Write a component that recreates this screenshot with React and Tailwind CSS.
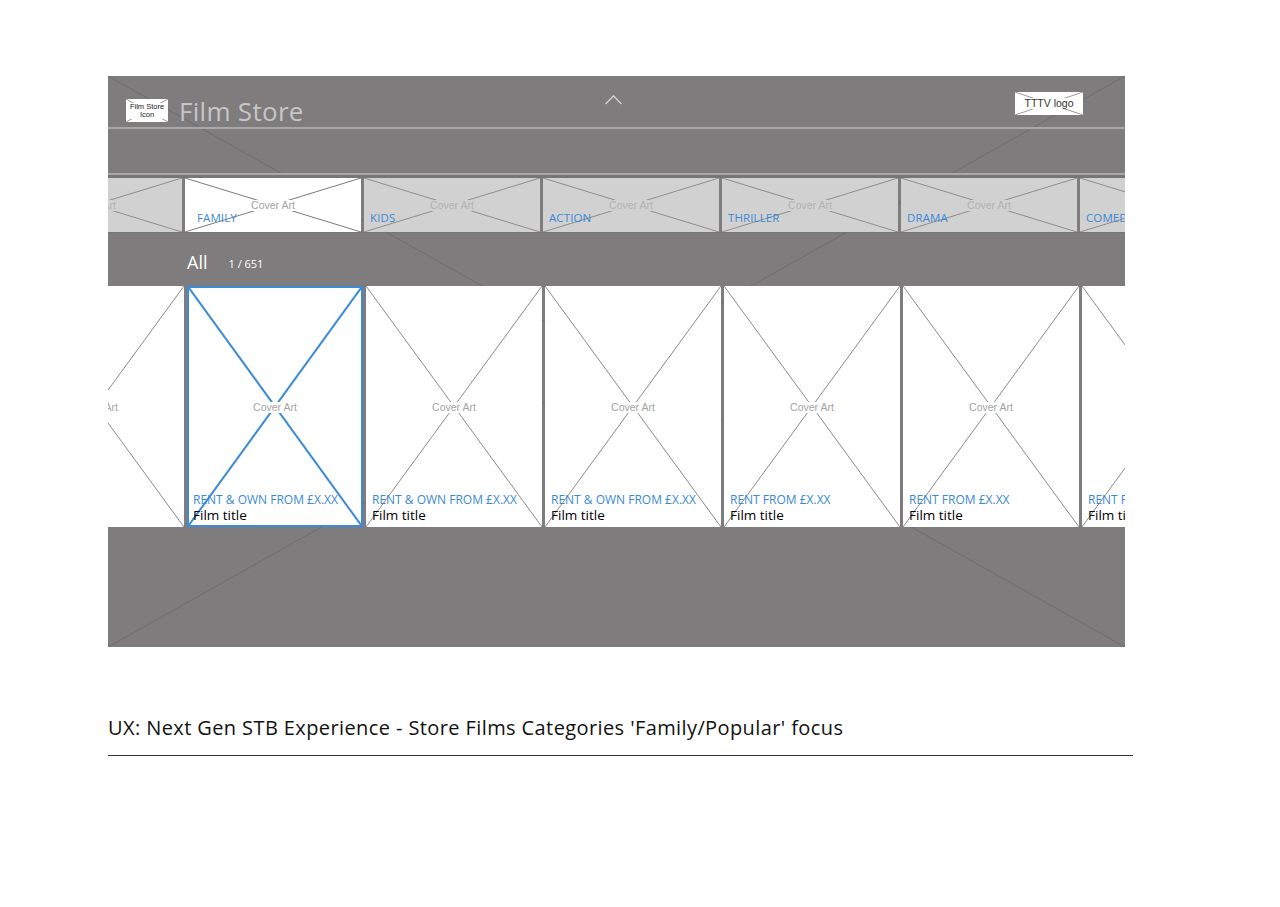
import React from "react";

const XLines = ({ color = "#8a8a8a", width = 1 }) => (
  <svg className="absolute inset-0 w-full h-full" preserveAspectRatio="none" viewBox="0 0 100 100">
    <line x1="0" y1="0" x2="100" y2="100" stroke={color} strokeWidth={width} vectorEffect="non-scaling-stroke" />
    <line x1="100" y1="0" x2="0" y2="100" stroke={color} strokeWidth={width} vectorEffect="non-scaling-stroke" />
  </svg>
);

const cats = ["", "FAMILY", "KIDS", "ACTION", "THRILLER", "DRAMA", "COMEDY"];
const cards = [
  { price: "", title: "" },
  { price: "RENT & OWN FROM £X.XX", title: "Film title", focus: true },
  { price: "RENT & OWN FROM £X.XX", title: "Film title" },
  { price: "RENT & OWN FROM £X.XX", title: "Film title" },
  { price: "RENT FROM £X.XX", title: "Film title" },
  { price: "RENT FROM £X.XX", title: "Film title" },
  { price: "RENT FROM £X.XX", title: "Film title" },
];

const font = { fontFamily: "'Open Sans', 'Liberation Sans', sans-serif" };
const arial = { fontFamily: "'Liberation Sans', Arial, sans-serif" };

export default function App() {
  return (
    <div className="w-[1280px] h-[907px] bg-white pt-[76px] pl-[108px]">
      <div className="relative w-[1017px] h-[571px] bg-[#7e7c7d] overflow-hidden">
        <XLines color="#6f6d6e" />
        <div className="relative flex flex-col h-full">
          {/* header */}
          <div className="h-[51px] flex items-center relative shrink-0">
            <div className="ml-[18px] mt-[18px] relative w-[42px] h-[23px] bg-white flex items-center justify-center">
              <XLines color="#9a9a9a" />
              <div className="relative bg-white px-[1px] text-[7.5px] leading-[8px] text-[#222] text-center" style={arial}>
                Film Store<br />Icon
              </div>
            </div>
            <div className="ml-[11px] mt-[18px] text-[26px] leading-none text-[#c6c6c6] tracking-[0.3px]" style={font}>
              Film Store
            </div>
            <svg className="absolute left-[496px] top-[18px]" width="20" height="12" viewBox="0 0 20 12">
              <polyline points="1.5,10 9.5,2 17.5,10" fill="none" stroke="#d4d4d4" strokeWidth="1.3" />
            </svg>
            <div className="absolute left-[907px] top-[16px] w-[68px] h-[23px] bg-white flex items-center justify-center">
              <XLines color="#9a9a9a" />
              <div className="relative bg-white px-[3px] text-[10.5px] leading-none text-[#333]" style={arial}>TTTV logo</div>
            </div>
          </div>
          <div className="h-[2px] bg-[#a9a8a8] shrink-0" />
          <div className="h-[44px] shrink-0" />
          <div className="h-[2px] bg-[#a9a8a8] shrink-0" />
          {/* category row */}
          <div className="h-[3px] bg-[#777576] shrink-0" />
          <div className="flex gap-[3px] ml-[-102px] h-[54px] shrink-0">
            {cats.map((c, i) => {
              const sel = c === "FAMILY";
              const bg = sel ? "bg-white" : "bg-[#d1d1d1]";
              return (
                <div key={i} className={`relative w-[176px] shrink-0 h-full ${bg}`}>
                  <XLines color={sel ? "#7a7a7a" : "#8e8e8e"} />
                  <div className="absolute inset-x-0 top-[22px] flex justify-center">
                    <span className={`px-[3px] text-[10.5px] leading-none ${sel ? "bg-white text-[#a3a3a3]" : "bg-[#d1d1d1] text-[#b3b3b3]"}`} style={arial}>
                      Cover Art
                    </span>
                  </div>
                  <div className={`absolute ${sel ? "left-[12px]" : "left-[6px]"} top-[34px] text-[11.5px] leading-none text-[#3a89d5] tracking-[0.1px]`} style={font}>
                    {c}
                  </div>
                </div>
              );
            })}
          </div>
          <div className="h-[1px] bg-[#777576] shrink-0" />
          {/* All row */}
          <div className="h-[53px] flex items-center shrink-0">
            <span className="ml-[79px] mt-[5px] text-[18px] text-white leading-none" style={font}>All</span>
            <span className="ml-[21px] mt-[8px] text-[11px] text-white leading-none" style={font}>1 / 651</span>
          </div>
          {/* cards */}
          <div className="flex gap-[3px] ml-[-100px] h-[241px] shrink-0">
            {cards.map((c, i) => (
              <div
                key={i}
                className={`relative w-[176px] shrink-0 h-full bg-white ${c.focus ? "border-2 border-[#3b8bd6]" : ""}`}
              >
                <XLines color={c.focus ? "#3b8bd6" : "#8a8a8a"} width={c.focus ? 2 : 1} />
                <div className={`absolute inset-x-0 ${c.focus ? "top-[114px]" : "top-[116px]"} flex justify-center`}>
                  <span className="bg-white px-[3px] text-[10.5px] leading-none text-[#a3a3a3]" style={arial}>Cover Art</span>
                </div>
                {c.price && (
                  <div className={`absolute ${c.focus ? "left-[4px] bottom-[2px]" : "left-[6px] bottom-[4px]"}`}>
                    <div className="text-[12px] leading-[15px] text-[#3a89d5] whitespace-nowrap" style={font}>{c.price}</div>
                    <div className="text-[13.5px] leading-[16px] text-black whitespace-nowrap" style={font}>{c.title}</div>
                  </div>
                )}
              </div>
            ))}
          </div>
        </div>
      </div>
      <div className="mt-[71px] text-[20px] leading-none text-[#111] tracking-[0.4px]" style={font}>
        UX: Next Gen STB Experience - Store Films Categories 'Family/Popular' focus
      </div>
      <div className="mt-[17px] w-[1025px] h-[1px] bg-[#333]" />
    </div>
  );
}
